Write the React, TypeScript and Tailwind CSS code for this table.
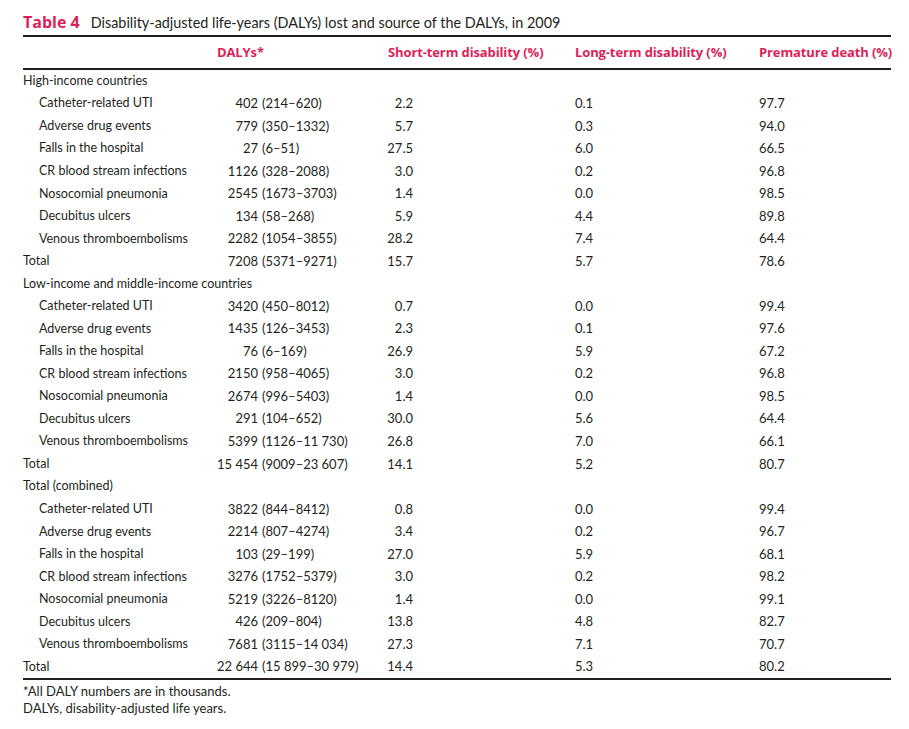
import React from "react";

type Row = [string, string, string, string, string, string];

const groups: { title: string; rows: Row[]; total: Row }[] = [
  {
    title: "High-income countries",
    rows: [
      ["Catheter-related UTI", "402", "(214–620)", "2.2", "0.1", "97.7"],
      ["Adverse drug events", "779", "(350–1332)", "5.7", "0.3", "94.0"],
      ["Falls in the hospital", "27", "(6–51)", "27.5", "6.0", "66.5"],
      ["CR blood stream infections", "1126", "(328–2088)", "3.0", "0.2", "96.8"],
      ["Nosocomial pneumonia", "2545", "(1673–3703)", "1.4", "0.0", "98.5"],
      ["Decubitus ulcers", "134", "(58–268)", "5.9", "4.4", "89.8"],
      ["Venous thromboembolisms", "2282", "(1054–3855)", "28.2", "7.4", "64.4"],
    ],
    total: ["Total", "7208", "(5371–9271)", "15.7", "5.7", "78.6"],
  },
  {
    title: "Low-income and middle-income countries",
    rows: [
      ["Catheter-related UTI", "3420", "(450–8012)", "0.7", "0.0", "99.4"],
      ["Adverse drug events", "1435", "(126–3453)", "2.3", "0.1", "97.6"],
      ["Falls in the hospital", "76", "(6–169)", "26.9", "5.9", "67.2"],
      ["CR blood stream infections", "2150", "(958–4065)", "3.0", "0.2", "96.8"],
      ["Nosocomial pneumonia", "2674", "(996–5403)", "1.4", "0.0", "98.5"],
      ["Decubitus ulcers", "291", "(104–652)", "30.0", "5.6", "64.4"],
      ["Venous thromboembolisms", "5399", "(1126–11 730)", "26.8", "7.0", "66.1"],
    ],
    total: ["Total", "15 454", "(9009–23 607)", "14.1", "5.2", "80.7"],
  },
  {
    title: "Total (combined)",
    rows: [
      ["Catheter-related UTI", "3822", "(844–8412)", "0.8", "0.0", "99.4"],
      ["Adverse drug events", "2214", "(807–4274)", "3.4", "0.2", "96.7"],
      ["Falls in the hospital", "103", "(29–199)", "27.0", "5.9", "68.1"],
      ["CR blood stream infections", "3276", "(1752–5379)", "3.0", "0.2", "98.2"],
      ["Nosocomial pneumonia", "5219", "(3226–8120)", "1.4", "0.0", "99.1"],
      ["Decubitus ulcers", "426", "(209–804)", "13.8", "4.8", "82.7"],
      ["Venous thromboembolisms", "7681", "(3115–14 034)", "27.3", "7.1", "70.7"],
    ],
    total: ["Total", "22 644", "(15 899–30 979)", "14.4", "5.3", "80.2"],
  },
];

const grid =
  "grid grid-cols-[177px_58px_112px_43px_162px_184px_1fr] items-center whitespace-nowrap";

function DataRow({ row, indent }: { row: Row; indent: boolean }) {
  return (
    <div className={`${grid} h-[22.54px]`}>
      <span className={`text-[12.5px] ${indent ? "pl-[16px]" : ""}`}>{row[0]}</span>
      <span className="text-right">{row[1]}</span>
      <span className="pl-[4px]">{row[2]}</span>
      <span className="text-right">{row[3]}</span>
      <span />
      <span>{row[4]}</span>
      <span>{row[5]}</span>
    </div>
  );
}

export default function App() {
  return (
    <div className="min-h-screen bg-white pl-[23px] pr-[18px] pt-[10px] text-[13px] text-[#231f20] font-['Lato',sans-serif]">
      <div className="flex items-baseline h-[25px] whitespace-nowrap">
        <span className="text-[16px] font-bold text-[#dc1f5a] font-['Open_Sans',sans-serif]">
          Table 4
        </span>
        <span className="ml-[11px] text-[14.4px]">
          Disability-adjusted life-years (DALYs) lost and source of the DALYs, in 2009
        </span>
      </div>

      <div className="border-t-2 border-b-2 border-[#231f20]">
        <div
          className={`${grid} h-[31px] font-bold tracking-[-0.12px] text-[#dc1f5a] font-['Open_Sans',sans-serif]`}
        >
          <span />
          <span className="col-span-2 pl-[17px]">DALYs*</span>
          <span className="col-span-2 pl-[18px]">Short-term disability (%)</span>
          <span>Long-term disability (%)</span>
          <span>Premature death (%)</span>
        </div>
      </div>

      <div className="border-b-2 border-[#231f20]">
        {groups.map((g) => (
          <div key={g.title}>
            <div className="h-[22.54px] flex items-center text-[12.5px]">{g.title}</div>
            {g.rows.map((r) => (
              <DataRow key={r[0]} row={r} indent />
            ))}
            <DataRow row={g.total} indent={false} />
          </div>
        ))}
      </div>

      <div className="pt-[3px] leading-[17px]">
        <p>*All DALY numbers are in thousands.</p>
        <p>DALYs, disability-adjusted life years.</p>
      </div>
    </div>
  );
}
